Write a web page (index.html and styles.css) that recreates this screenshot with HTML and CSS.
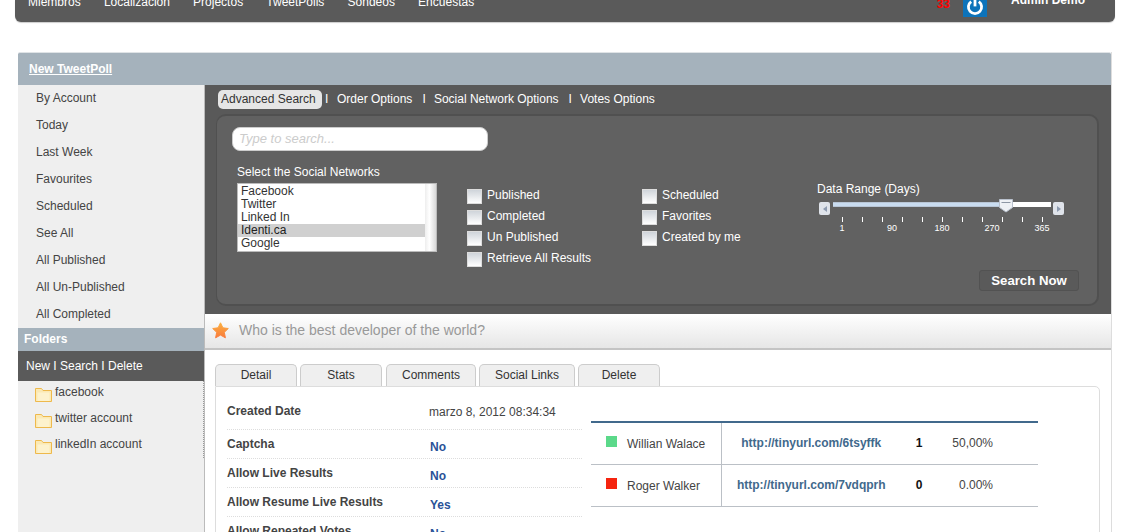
FILE: index.html
```html
<!DOCTYPE html>
<html lang="en">
  <head>
    <meta charset="UTF-8" />
    <title>TweetPoll</title>
    <link rel="stylesheet" href="styles.css">
  </head>

  <body>
    <div class="topbar">
      <ul class="nav">
        <li>Miembros</li>
        <li>Localización</li>
        <li>Projectos</li>
        <li>TweetPolls</li>
        <li>Sondeos</li>
        <li>Encuestas</li>
      </ul>
      <span class="notify">33</span>
      <span class="power">
        <svg width="24" height="17" viewBox="0 0 24 17">
          <path d="M8.2 1.6a6.6 6.6 0 1 0 7.6 0" fill="none" stroke="#fff" stroke-width="2.8" />
          <path d="M12 -1v7.4" fill="none" stroke="#fff" stroke-width="2.8" />
        </svg>
      </span>
      <span class="user">Admin Demo</span>
    </div>

    <div class="panel">
      <div class="panel-title"><a href="#">New TweetPoll</a></div>
      <div class="panel-body">
        <div class="side">
          <ul class="side-menu">
            <li>By Account</li>
            <li>Today</li>
            <li>Last Week</li>
            <li>Favourites</li>
            <li>Scheduled</li>
            <li>See All</li>
            <li>All Published</li>
            <li>All Un-Published</li>
            <li>All Completed</li>
          </ul>
          <div class="side-head">Folders</div>
          <div class="side-actions">New I Search I Delete</div>
          <ul class="folders">
            <li>
              <svg class="folder" width="17" height="15" viewBox="0 0 17 15">
                <path d="M.5 14.5V1.5h6l1.5 2h8.5v11z" fill="#fbe9b4" stroke="#eeb94c" />
                <path d="M2.5 14V5.5h12V14z" fill="#fdf2cd" />
              </svg>
              facebook
            </li>
            <li>
              <svg class="folder" width="17" height="15" viewBox="0 0 17 15">
                <path d="M.5 14.5V1.5h6l1.5 2h8.5v11z" fill="#fbe9b4" stroke="#eeb94c" />
                <path d="M2.5 14V5.5h12V14z" fill="#fdf2cd" />
              </svg>
              twitter account
            </li>
            <li>
              <svg class="folder" width="17" height="15" viewBox="0 0 17 15">
                <path d="M.5 14.5V1.5h6l1.5 2h8.5v11z" fill="#fbe9b4" stroke="#eeb94c" />
                <path d="M2.5 14V5.5h12V14z" fill="#fdf2cd" />
              </svg>
              linkedIn account
            </li>
          </ul>
        </div>

        <div class="main">
          <div class="search-box">
            <div class="search-tabs">
              <span class="search-tab current">Advanced Search</span>
              <span class="sep">I</span>
              <span class="search-tab">Order Options</span>
              <span class="sep">I</span>
              <span class="search-tab">Social Network Options</span>
              <span class="sep">I</span>
              <span class="search-tab">Votes Options</span>
            </div>
            <div class="filters">
              <input class="search-input" type="text" placeholder="Type to search..." />
              <div class="filter-row">
                <div class="networks">
                  <div class="filter-title">Select the Social Networks</div>
                  <div class="listbox">
                    <ul>
                      <li>Facebook</li>
                      <li>Twitter</li>
                      <li>Linked In</li>
                      <li class="selected">Identi.ca</li>
                      <li>Google</li>
                    </ul>
                    <div class="scroll"></div>
                  </div>
                </div>
                <div class="checks">
                  <label><i></i>Published</label>
                  <label><i></i>Completed</label>
                  <label><i></i>Un Published</label>
                  <label><i></i>Retrieve All Results</label>
                </div>
                <div class="checks">
                  <label><i></i>Scheduled</label>
                  <label><i></i>Favorites</label>
                  <label><i></i>Created by me</label>
                </div>
                <div class="range">
                  <div class="filter-title">Data Range (Days)</div>
                  <div class="slider">
                    <span class="arrow"><b class="arrow-left"></b></span>
                    <div class="track">
                      <div class="track-fill"></div>
                      <svg class="handle" width="16" height="15" viewBox="0 0 16 15">
                        <path d="M1.5 1.5h13v8l-6.5 4.500l-6.5-4.500z" fill="#eef1f5" stroke="#b9c1cd" />
                        <path d="M3.5 4.5h9" stroke="#8d97a5" />
                      </svg>
                    </div>
                    <span class="arrow"><b class="arrow-right"></b></span>
                  </div>
                  <div class="ticks">
                    <i></i><i></i><i></i><i></i><i></i><i></i><i></i><i></i><i></i><i></i><i></i>
                  </div>
                  <div class="tick-labels">
                    <span>1</span><span>90</span><span>180</span><span>270</span><span>365</span>
                  </div>
                </div>
              </div>
              <div class="filter-foot"><button class="search-btn">Search Now</button></div>
            </div>
          </div>

          <div class="question">
            <svg width="17" height="17" viewBox="0 0 17 17">
              <defs>
                <linearGradient id="star" x1="0" y1="0" x2="0" y2="1">
                  <stop offset="0" stop-color="#fbb040" />
                  <stop offset="1" stop-color="#f97a3c" />
                </linearGradient>
              </defs>
              <path d="M8.5 .8l2.400 5 5.400 .7-4 3.800 1.100 5.500-4.900-2.700-4.900 2.700 1.100-5.500-4-3.800 5.400-.7z" fill="url(#star)" stroke="url(#star)" stroke-linejoin="round" />
            </svg>
            <span>Who is the best developer of the world?</span>
          </div>

          <ul class="tabs">
            <li class="tab-detail">Detail</li>
            <li class="tab-stats">Stats</li>
            <li class="tab-comments">Comments</li>
            <li class="tab-links">Social Links</li>
            <li class="tab-delete">Delete</li>
          </ul>
          <div class="tab-box">
            <div class="details">
              <div class="row row-first"><b>Created Date</b><span>marzo 8, 2012 08:34:34</span></div>
              <div class="row"><b>Captcha</b><em>No</em></div>
              <div class="row"><b>Allow Live Results</b><em>No</em></div>
              <div class="row"><b>Allow Resume Live Results</b><em>Yes</em></div>
              <div class="row"><b>Allow Repeated Votes</b><em>No</em></div>
            </div>
            <table class="results">
              <tr>
                <td class="who"><i class="swatch green"></i>Willian Walace</td>
                <td class="url"><a href="#">http://tinyurl.com/6tsyffk</a></td>
                <td class="count">1</td>
                <td class="pct">50,00%</td>
              </tr>
              <tr>
                <td class="who"><i class="swatch red"></i>Roger Walker</td>
                <td class="url"><a href="#">http://tinyurl.com/7vdqprh</a></td>
                <td class="count">0</td>
                <td class="pct">0.00%</td>
              </tr>
            </table>
          </div>
        </div>
      </div>
    </div>
  </body>
</html>
```

FILE: styles.css
```css
* {
  padding: 0;
  margin: 0;
  list-style: none;
  box-sizing: border-box;
}

html {
  overflow: hidden;
  height: 532px;
}

body {
  background: #fff;
  font-family: "Liberation Sans", Arial, sans-serif;
  font-size: 12px;
  color: #444;
  height: 532px;
  overflow: hidden;
}

.topbar {
  margin: 0 26px 0 15px;
  height: 22px;
  background: #5a5a5a;
  border-radius: 0 0 6px 6px;
  box-shadow: 0 1px 1px #ccc;
  display: flex;
  color: #fff;
  line-height: 4px;
}

.nav {
  display: flex;
  gap: 23.2px;
  padding-left: 13px;
  flex: 1;
}

.notify {
  color: #f00;
  font-weight: bold;
  line-height: 8px;
  margin-right: 13px;
}

.power {
  width: 24px;
  height: 17px;
  background: #0d73ba;
  margin-right: 24px;
  display: block;
  line-height: 0;
}

.user {
  font-weight: bold;
  line-height: 0;
  margin-right: 30px;
}

.panel {
  margin: 30px 29px 0 18px;
  border-right: 1px solid #ddd;
}

.panel-title {
  height: 33px;
  line-height: 33px;
  padding-left: 11px;
  background: #a5b2bc;
  border-top: 1px solid #dfe3e6;
  border-radius: 2px 2px 0 0;
}

.panel-title a {
  color: #fff;
  font-weight: bold;
}

.panel-body {
  display: flex;
  height: 500px;
}

.side {
  position: relative;
  width: 187px;
  background: #efefef;
  border-right: 1px solid #bbb;
}

/* splitter handle */
.side::after {
  content: "";
  position: absolute;
  right: 0;
  top: 296px;
  height: 77px;
  border-right: 1px dotted #999;
}

.side-menu li {
  height: 27px;
  line-height: 27px;
  padding-left: 18px;
}

.side-head {
  height: 23px;
  line-height: 23px;
  padding-left: 6px;
  background: #a5b2bc;
  color: #fff;
  font-weight: bold;
}

.side-actions {
  height: 30px;
  line-height: 30px;
  padding-left: 8px;
  background: #5a5a5a;
  color: #fff;
}

.folders li {
  height: 26px;
  line-height: 22px;
  padding-left: 17px;
  display: flex;
  gap: 3px;
}

.folder {
  margin-top: 6px;
}

.main {
  flex: 1;
  min-width: 0;
}

.search-box {
  height: 229px;
  background: #595959;
  padding: 0 12px 0 11px;
}

.search-tabs {
  height: 29px;
  padding: 5px 0 0 2px;
  display: flex;
  align-items: flex-start;
  color: #fff;
  line-height: 19px;
}

.search-tab {
  padding: 0 3px;
}

.search-tab.current {
  background: #e6e6e6;
  color: #333;
  border-radius: 5px;
  width: 104px;
}

.sep {
  width: 15.5px;
  padding-left: 7px;
}

.search-tab.current + .sep {
  width: 12px;
  padding-left: 3px;
}

.filters {
  height: 192px;
  background: #616161;
  border-radius: 10px;
  border: 1px solid #505050;
  border-width: 2px 2px 2px 1px;
  padding: 11px 18px 0 15px;
}

.search-input {
  display: block;
  width: 256px;
  height: 24px;
  padding: 0 0 2px 6px;
  border: 1px solid #ccc;
  border-radius: 8px;
  background: #fff;
  font-family: inherit;
  font-size: 13px;
  font-style: italic;
}

.search-input::placeholder {
  color: #ccc;
}

.filter-row {
  display: flex;
  margin-top: 14px;
  padding-left: 5px;
  color: #fff;
  height: 102px;
}

.filter-title {
  height: 14px;
  line-height: 14px;
}

.networks {
  width: 230px;
}

.listbox {
  width: 200px;
  height: 69px;
  margin-top: 4px;
  background: #fff;
  border: 1px solid #bbb;
  display: flex;
  color: #333;
}

.listbox ul {
  flex: 1;
  padding-top: 1px;
}

.listbox li {
  height: 13px;
  line-height: 13px;
  padding-left: 3px;
}

.listbox .selected {
  background: #d0d0d0;
  color: #222;
}

.scroll {
  width: 11px;
  background: linear-gradient(to right, #eee, #fff 40%, #d8d8d8);
}

.checks {
  width: 175px;
  padding-top: 24px;
  display: flex;
  flex-direction: column;
  gap: 6px;
}

.checks label {
  height: 15px;
  line-height: 12px;
  display: flex;
  gap: 5px;
}

.checks i {
  width: 15px;
  height: 15px;
  background: linear-gradient(#cfd4da, #fff);
  border: 1px solid #ddd;
}

.range {
  padding-top: 17px;
  width: 250px;
}

.slider {
  display: flex;
  margin: 6px 0 0 2px;
  height: 13px;
}

.arrow {
  width: 11px;
  height: 13px;
  background: #dfe3ea;
  border-radius: 2px;
  display: flex;
  align-items: center;
  justify-content: center;
}

.arrow b {
  border: 3px solid transparent;
}

.arrow-left {
  border-right: 4px solid #8d9bb0 !important;
  border-left: 0 !important;
}

.arrow-right {
  border-left: 4px solid #8d9bb0 !important;
  border-right: 0 !important;
}

.track {
  position: relative;
  width: 218px;
  height: 5px;
  margin: 0 2px 0 3px;
  background: #fff;
}

.track-fill {
  width: 170px;
  height: 5px;
  background: #c9dcf0;
  border: 1px solid #b9c6d6;
  border-width: 1px 0;
}

.handle {
  position: absolute;
  left: 165px;
  top: -4px;
}

.ticks {
  display: flex;
  justify-content: space-between;
  width: 201px;
  margin: 2px 0 0 25px;
}

.ticks i {
  width: 1px;
  height: 5px;
  background: #fff;
}

.tick-labels {
  display: flex;
  margin-top: 1px;
  font-size: 9px;
  line-height: 10px;
}

.tick-labels span {
  width: 50px;
  text-align: center;
}

.filter-foot {
  display: flex;
  justify-content: flex-end;
  margin-top: 3px;
}

.search-btn {
  width: 100px;
  height: 21px;
  background: #5a5a5a;
  border: 1px solid #525252;
  border-radius: 3px;
  color: #fff;
  font-family: inherit;
  font-size: 13.2px;
  font-weight: bold;
}

.question {
  height: 36px;
  padding: 0 0 2px 7px;
  background: linear-gradient(#fff, #e6e6e6);
  border-bottom: 2px solid #c4c4c4;
  display: flex;
  align-items: center;
  gap: 10px;
  font-size: 14px;
  color: #999;
}

.tabs {
  display: flex;
  margin: 14px 0 0 10px;
}

.tabs li {
  height: 22px;
  line-height: 20px;
  text-align: center;
  background: #efefef;
  border: 1px solid #ccc;
  border-bottom: 0;
  border-radius: 5px 5px 0 0;
  color: #333;
}

.tab-detail { width: 82px; margin-right: 3px; }
.tab-stats { width: 82px; margin-right: 4px; }
.tab-comments { width: 90px; margin-right: 3px; }
.tab-links { width: 96px; margin-right: 3px; }
.tab-delete { width: 82px; }

.tab-box {
  display: flex;
  align-items: flex-start;
  margin: 0 11px 0 10px;
  height: 200px;
  border: 1px solid #ddd;
  border-radius: 0 5px 0 0;
}

.details {
  width: 355px;
  margin: 10px 0 0 11px;
}

.row {
  height: 29px;
  display: flex;
  align-items: center;
  border-bottom: 1px dotted #ddd;
}

.row-first {
  height: 33px;
  padding-bottom: 4px;
}

.row b {
  width: 203px;
  color: #444;
}

.row em {
  font-style: normal;
  font-weight: bold;
  color: #2a5298;
  padding-top: 6px;
}

.row span {
  padding-top: 2px;
  margin-left: -1px;
}

.results {
  width: 447px;
  margin: 34px 0 0 9px;
  border-collapse: collapse;
  border-top: 2px solid #41698c;
}

.results td {
  height: 42px;
  border-bottom: 1px solid #bbc0c6;
}

.results .who {
  width: 130px;
  padding: 0 0 0 15px;
  border-right: 1px solid #bbc0c6;
}

.swatch {
  display: inline-block;
  width: 11px;
  height: 11px;
  margin-right: 10px;
  vertical-align: 1px;
}

.green { background: #5bd98a; }
.red { background: #f5240f; }

.url {
  width: 180px;
  text-align: center;
}

.url a {
  color: #41698c;
  font-weight: bold;
  text-decoration: none;
}

.count {
  width: 36px;
  text-align: center;
  font-weight: bold;
  color: #111;
}

.pct {
  text-align: right;
  padding-right: 45px;
}
```
